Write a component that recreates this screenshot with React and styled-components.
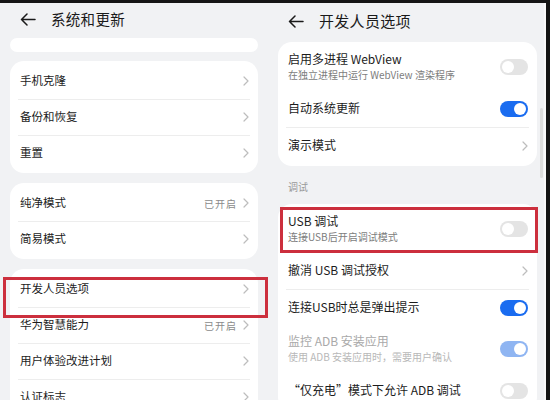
import React from "react";
import styled, { createGlobalStyle } from "styled-components";

const GlobalStyle = createGlobalStyle`
  body {
    margin: 0;
    background: #f1f2f4;
    font-family: "Noto Sans CJK SC", "Noto Sans", sans-serif;
  }
`;

const Screen = styled.div`
  display: flex;
  width: 550px;
  height: 400px;
  overflow: hidden;
  border-top: 3px solid #151515;
  box-sizing: border-box;
  background: #f1f2f4;
`;

const Panel = styled.div`
  position: relative;
  display: flex;
  flex-direction: column;
  width: ${(p) => p.$width}px;
  flex-shrink: 0;
  padding: 0 ${(p) => p.$padRight}px 0 10px;
  box-sizing: border-box;
`;

const Edge = styled.div`
  flex: 1;
  border-left: 2px solid #f9f9f9;
  background: #141414;
`;

const Header = styled.div`
  display: flex;
  align-items: center;
  gap: 15px;
  height: ${(p) => p.$h}px;
  padding-left: 10px;
  flex-shrink: 0;
`;

const Title = styled.div`
  font-size: ${(p) => p.$size}px;
  line-height: 18px;
  color: #1a1a1a;
  letter-spacing: 0.3px;
  margin-top: -3px;
`;

const Stub = styled.div`
  height: 14px;
  margin-bottom: 9px;
  border-radius: 8px;
  background: #fff;
  flex-shrink: 0;
`;

const Card = styled.div`
  background: #fff;
  border-radius: 14px;
  padding: 2px 0;
  margin-bottom: ${(p) => (p.$last ? 0 : 10)}px;
  flex-shrink: 0;
`;

const Row = styled.div`
  position: relative;
  display: flex;
  align-items: center;
  height: ${(p) => p.$h}px;
  padding: 0 9px 0 10px;

  & + &::before {
    content: "";
    position: absolute;
    top: 0;
    left: 8px;
    right: 8px;
    height: 1px;
    background: #ededed;
  }
`;

const Texts = styled.div`
  flex: 1;
  display: flex;
  flex-direction: column;
  gap: 2px;
  margin-top: -2px;
`;

const Label = styled.div`
  font-size: ${(p) => p.$size}px;
  line-height: 15px;
  color: ${(p) => (p.$disabled ? "#a9a9a9" : "#1c1c1c")};
  white-space: nowrap;
`;

const Sub = styled.div`
  font-size: 10px;
  line-height: 14px;
  color: ${(p) => (p.$disabled ? "#b8b8b8" : "#7d7d7d")};
  white-space: nowrap;
`;

const Value = styled.span`
  font-size: 10px;
  color: #8a8a8a;
  margin-right: 6px;
  letter-spacing: 1px;
`;

const Section = styled.div`
  font-size: 10px;
  line-height: 14px;
  color: #9a9a9a;
  padding: 14px 0 10px 10px;
`;

const Track = styled.span`
  position: relative;
  width: 28px;
  height: 16px;
  border-radius: 8px;
  flex-shrink: 0;
  background: ${(p) =>
    p.$on ? (p.$disabled ? "#8fb5f2" : "#1a6cf0") : "#e4e4e4"};

  &::after {
    content: "";
    position: absolute;
    top: 2px;
    left: ${(p) => (p.$on ? "14px" : "2px")};
    width: 12px;
    height: 12px;
    border-radius: 50%;
    background: #fff;
  }
`;

const Mark = styled.div`
  position: absolute;
  top: ${(p) => p.$t}px;
  left: ${(p) => p.$l}px;
  right: ${(p) => p.$r}px;
  bottom: ${(p) => p.$b}px;
  border: 3px solid #cc2f3d;
  pointer-events: none;
`;

const Scrollbar = styled.div`
  position: absolute;
  top: 105px;
  right: 1px;
  width: 3px;
  height: 70px;
  border-radius: 2px;
  background: #dcdcdc;
`;

const Back = () => (
  <svg width="16" height="13" viewBox="0 0 16 13" fill="none" style={{ marginTop: -3 }}>
    <path d="M15 6.5H1.5M7 1L1.5 6.5L7 12" stroke="#1a1a1a" strokeWidth="1.5" strokeLinecap="round" strokeLinejoin="round" />
  </svg>
);

const Chevron = () => (
  <svg width="6" height="10" viewBox="0 0 6 10" fill="none">
    <path d="M1 1L5 5L1 9" stroke="#bdbdbd" strokeWidth="1.2" strokeLinecap="round" strokeLinejoin="round" />
  </svg>
);

const LeftRow = ({ label, value, children }) => (
  <Row $h={36}>
    <Texts>
      <Label $size={11.5}>{label}</Label>
    </Texts>
    {value && <Value>{value}</Value>}
    <Chevron />
    {children}
  </Row>
);

const RightRow = ({ label, sub, toggle, on, disabled, children }) => (
  <Row $h={sub ? 46 : 37}>
    <Texts>
      <Label $size={12} $disabled={disabled}>{label}</Label>
      {sub && <Sub $disabled={disabled}>{sub}</Sub>}
    </Texts>
    {toggle ? <Track $on={on} $disabled={disabled} /> : <Chevron />}
    {children}
  </Row>
);

export default function App() {
  return (
    <>
      <GlobalStyle />
      <Screen>
        <Panel $width={268} $padRight={10}>
          <Header $h={35}>
            <Back />
            <Title $size={14.5}>系统和更新</Title>
          </Header>
          <Stub />
          <Card>
            <LeftRow label="手机克隆" />
            <LeftRow label="备份和恢复" />
            <LeftRow label="重置" />
          </Card>
          <Card>
            <LeftRow label="纯净模式" value="已开启" />
            <LeftRow label="简易模式" />
          </Card>
          <Card>
            <LeftRow label="开发人员选项">
              <Mark $t={6} $l={-7} $r={-10} $b={-11} />
            </LeftRow>
            <LeftRow label="华为智慧能力" value="已开启" />
            <LeftRow label="用户体验改进计划" />
            <LeftRow label="认证标志" />
          </Card>
        </Panel>
        <Panel $width={276} $padRight={7}>
          <Header $h={39}>
            <Back />
            <Title $size={15}>开发人员选项</Title>
          </Header>
          <Card $last>
            <RightRow label="启用多进程 WebView" sub="在独立进程中运行 WebView 渲染程序" toggle />
            <RightRow label="自动系统更新" toggle on />
            <RightRow label="演示模式" />
          </Card>
          <Section>调试</Section>
          <Card>
            <RightRow label="USB 调试" sub="连接USB后开启调试模式" toggle>
              <Mark $t={1} $l={2} $r={-1} $b={-1} />
            </RightRow>
            <RightRow label="撤消 USB 调试授权" />
            <RightRow label="连接USB时总是弹出提示" toggle on />
            <RightRow label="监控 ADB 安装应用" sub="使用 ADB 安装应用时，需要用户确认" toggle on disabled />
            <RightRow label="“仅充电”模式下允许 ADB 调试" toggle />
          </Card>
          <Scrollbar />
        </Panel>
        <Edge />
      </Screen>
    </>
  );
}
